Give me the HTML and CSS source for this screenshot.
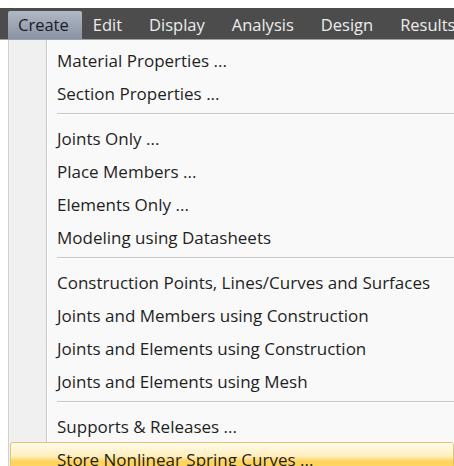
FILE: index.html
```html
<!DOCTYPE html>
<html lang="en">
<head>
<meta charset="utf-8">
<title>Create menu</title>
<link rel="stylesheet" href="styles.css">
</head>
<body>
  <div class="window">
    <nav class="menubar">
      <span class="menubar-item is-open">Create</span>
      <span class="menubar-item">Edit</span>
      <span class="menubar-item">Display</span>
      <span class="menubar-item">Analysis</span>
      <span class="menubar-item">Design</span>
      <span class="menubar-item">Results</span>
    </nav>

    <ul class="dropdown">
      <li class="entry">Material Properties ...</li>
      <li class="entry">Section Properties ...</li>
      <li class="divider"></li>
      <li class="entry">Joints Only ...</li>
      <li class="entry">Place Members ...</li>
      <li class="entry">Elements Only ...</li>
      <li class="entry">Modeling using Datasheets</li>
      <li class="divider"></li>
      <li class="entry">Construction Points, Lines/Curves and Surfaces</li>
      <li class="entry">Joints and Members using Construction</li>
      <li class="entry">Joints and Elements using Construction</li>
      <li class="entry">Joints and Elements using Mesh</li>
      <li class="divider"></li>
      <li class="entry">Supports &amp; Releases ...</li>
      <li class="entry is-hover">Store Nonlinear Spring Curves ...</li>
    </ul>
  </div>
</body>
</html>
```

FILE: styles.css
```css
html, body {
  margin: 0;
  padding: 0;
  background: #ffffff;
}

body {
  overflow: hidden;
  font-family: "Open Sans", "Noto Sans", "DejaVu Sans", sans-serif;
  color: #1f1f1f;
}

.window {
  padding-top: 8px;
}

/* dark application menu bar */
.menubar {
  display: flex;
  align-items: flex-end;
  height: 31px;
  padding-left: 8px;
  background: #4c4c4c;
  border-bottom: 1px solid #9aa2ae;
  white-space: nowrap;
  font-size: 16.5px;
}

.menubar-item {
  display: block;
  height: 28px;
  line-height: 27px;
  padding: 0 14px 0 13px;
  color: #ececec;
}

.menubar-item.is-open {
  color: #1b1b2e;
  padding: 0 13px 0 10px;
  border-radius: 2px 2px 0 0;
  background: linear-gradient(#b0b8c5, #8a93a1);
}

.menubar-item.is-open + .menubar-item {
  padding-left: 11px;
}

/* drop-down list under "Create" */
.dropdown {
  list-style: none;
  margin: 0 0 0 8px;
  padding: 4px 0 0 0;
  border-left: 1px solid #d0d0d0;
  font-size: 17px;
  background:
    linear-gradient(to right,
      #f0f0f0 0 37px,
      #c8c8c8 37px 38px,
      #ffffff 38px 39px,
      #f9f9f9 39px);
}

.entry {
  height: 33px;
  line-height: 33px;
  padding-left: 48px;
  white-space: nowrap;
}

.divider {
  height: 12px;
  margin-left: 48px;
  box-sizing: border-box;
  padding-top: 3px;
}

.divider::before {
  content: "";
  display: block;
  height: 1px;
  background: #c6c6c6;
  border-bottom: 1px solid #ffffff;
}

.entry.is-hover {
  margin: -1px 0 0 1px;
  padding-left: 46px;
  border: 1px solid #e2c572;
  border-radius: 3px;
  background: linear-gradient(#fffbea 0%, #ffefbd 40%, #ffe08a 48%, #ffd45e 56%, #ffd560 100%);
}
```
